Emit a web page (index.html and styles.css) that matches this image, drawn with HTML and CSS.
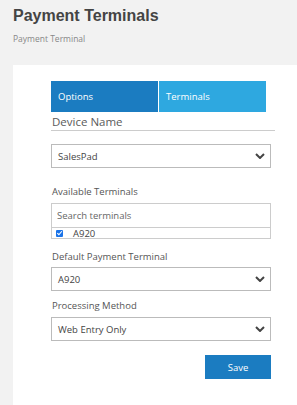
FILE: index.html
```html
<!DOCTYPE html>
<html lang="en">
<head>
    <meta charset="UTF-8">
    <meta name="viewport" content="width=device-width, initial-scale=1.0">
    <title>Payment Terminals</title>
    <link rel="stylesheet" href="styles.css">
</head>
<body>
    <div class="page-header">
        <h1>Payment Terminals</h1>
        <div class="crumb">Payment Terminal</div>
    </div>

    <div class="panel">
        <div class="form">
            <div class="tabs">
                <div class="tab active">Options</div>
                <div class="tab">Terminals</div>
            </div>

            <div class="section-title">Device Name</div>

            <div class="select select-first">
                <span>SalesPad</span>
                <svg class="chev" viewBox="0 0 10 6" width="10" height="6"><path d="M1 1l4 4 4-4" fill="none" stroke="#444" stroke-width="2"/></svg>
            </div>

            <label class="field-label label-terminals">Available Terminals</label>
            <div class="picker">
                <div class="search">Search terminals</div>
                <div class="option">
                    <span class="check"><svg viewBox="0 0 8 8" width="8" height="8"><path d="M1.5 4.2l1.8 1.8 3.4-4" fill="none" stroke="#fff" stroke-width="1.3"/></svg></span>
                    <span>A920</span>
                </div>
            </div>

            <label class="field-label label-default">Default Payment Terminal</label>
            <div class="select">
                <span>A920</span>
                <svg class="chev" viewBox="0 0 10 6" width="10" height="6"><path d="M1 1l4 4 4-4" fill="none" stroke="#444" stroke-width="2"/></svg>
            </div>

            <label class="field-label label-method">Processing Method</label>
            <div class="select">
                <span>Web Entry Only</span>
                <svg class="chev" viewBox="0 0 10 6" width="10" height="6"><path d="M1 1l4 4 4-4" fill="none" stroke="#444" stroke-width="2"/></svg>
            </div>

            <div class="actions">
                <button class="btn">Save</button>
            </div>
        </div>
    </div>
</body>
</html>
```

FILE: styles.css
```css
body {
    margin: 0;
    min-height: 100vh;
    display: flex;
    flex-direction: column;
    background: #f2f2f2;
    font-family: 'Open Sans', sans-serif;
    color: #555;
}
.page-header {
    padding: 6px 13px 0 13px;
    height: 65px;
    box-sizing: border-box;
}
.page-header h1 {
    margin: 0;
    font-family: 'Liberation Sans', Arial, sans-serif;
    font-size: 16px;
    font-weight: bold;
    color: #444;
    line-height: 19px;
}
.crumb {
    margin-top: 8px;
    font-size: 8.5px;
    color: #888;
}
.panel {
    flex: 1;
    margin-left: 13px;
    background: #fff;
    padding: 16px 0 0 38px;
}
.form {
    width: 220px;
}
.tabs {
    display: flex;
    gap: 1px;
    width: 215px;
}
.tab {
    width: 107px;
    height: 31px;
    line-height: 31px;
    padding-left: 7px;
    box-sizing: border-box;
    background: #2ea8e0;
    color: #fff;
    font-size: 9.5px;
}
.tab.active {
    background: #1b7cc1;
}
.section-title {
    width: 223px;
    font-size: 11.5px;
    color: #5a5a5a;
    padding: 2px 0 1px 1px;
    border-bottom: 1px solid #ccc;
    line-height: 15px;
}
.select {
    height: 24px;
    box-sizing: border-box;
    border: 1px solid #bbb;
    display: flex;
    align-items: center;
    justify-content: space-between;
    padding: 0 5px 0 6px;
    font-size: 9.5px;
    color: #444;
}
.select-first {
    margin-top: 13px;
}
.chev {
    display: block;
}
.field-label {
    display: block;
    font-size: 9.5px;
    color: #555;
    margin: 0 0 5px 1px;
    line-height: 13px;
}
.label-terminals {
    margin-top: 17px;
}
.label-default {
    margin-top: 11px;
    margin-bottom: 4px;
}
.label-method {
    margin-top: 8px;
}
.picker {
    border: 1px solid #ccc;
}
.search {
    height: 23px;
    line-height: 23px;
    padding-left: 5px;
    font-size: 9.5px;
    color: #666;
    border-bottom: 1px solid #ccc;
}
.option {
    height: 10px;
    display: flex;
    align-items: center;
    gap: 4px;
    font-size: 9.5px;
    color: #444;
    padding-left: 4px;
}
.check {
    width: 7px;
    height: 7px;
    background: #1a73e8;
    border-radius: 1px;
    display: flex;
    align-items: center;
    justify-content: center;
    margin-right: 6px;
}
.check svg {
    display: block;
}
.actions {
    display: flex;
    justify-content: flex-end;
    margin-top: 14px;
}
.btn {
    width: 66px;
    height: 24px;
    border: none;
    background: #1b7cc1;
    color: #fff;
    font-family: 'Open Sans', sans-serif;
    font-size: 9.5px;
    cursor: pointer;
}
```
